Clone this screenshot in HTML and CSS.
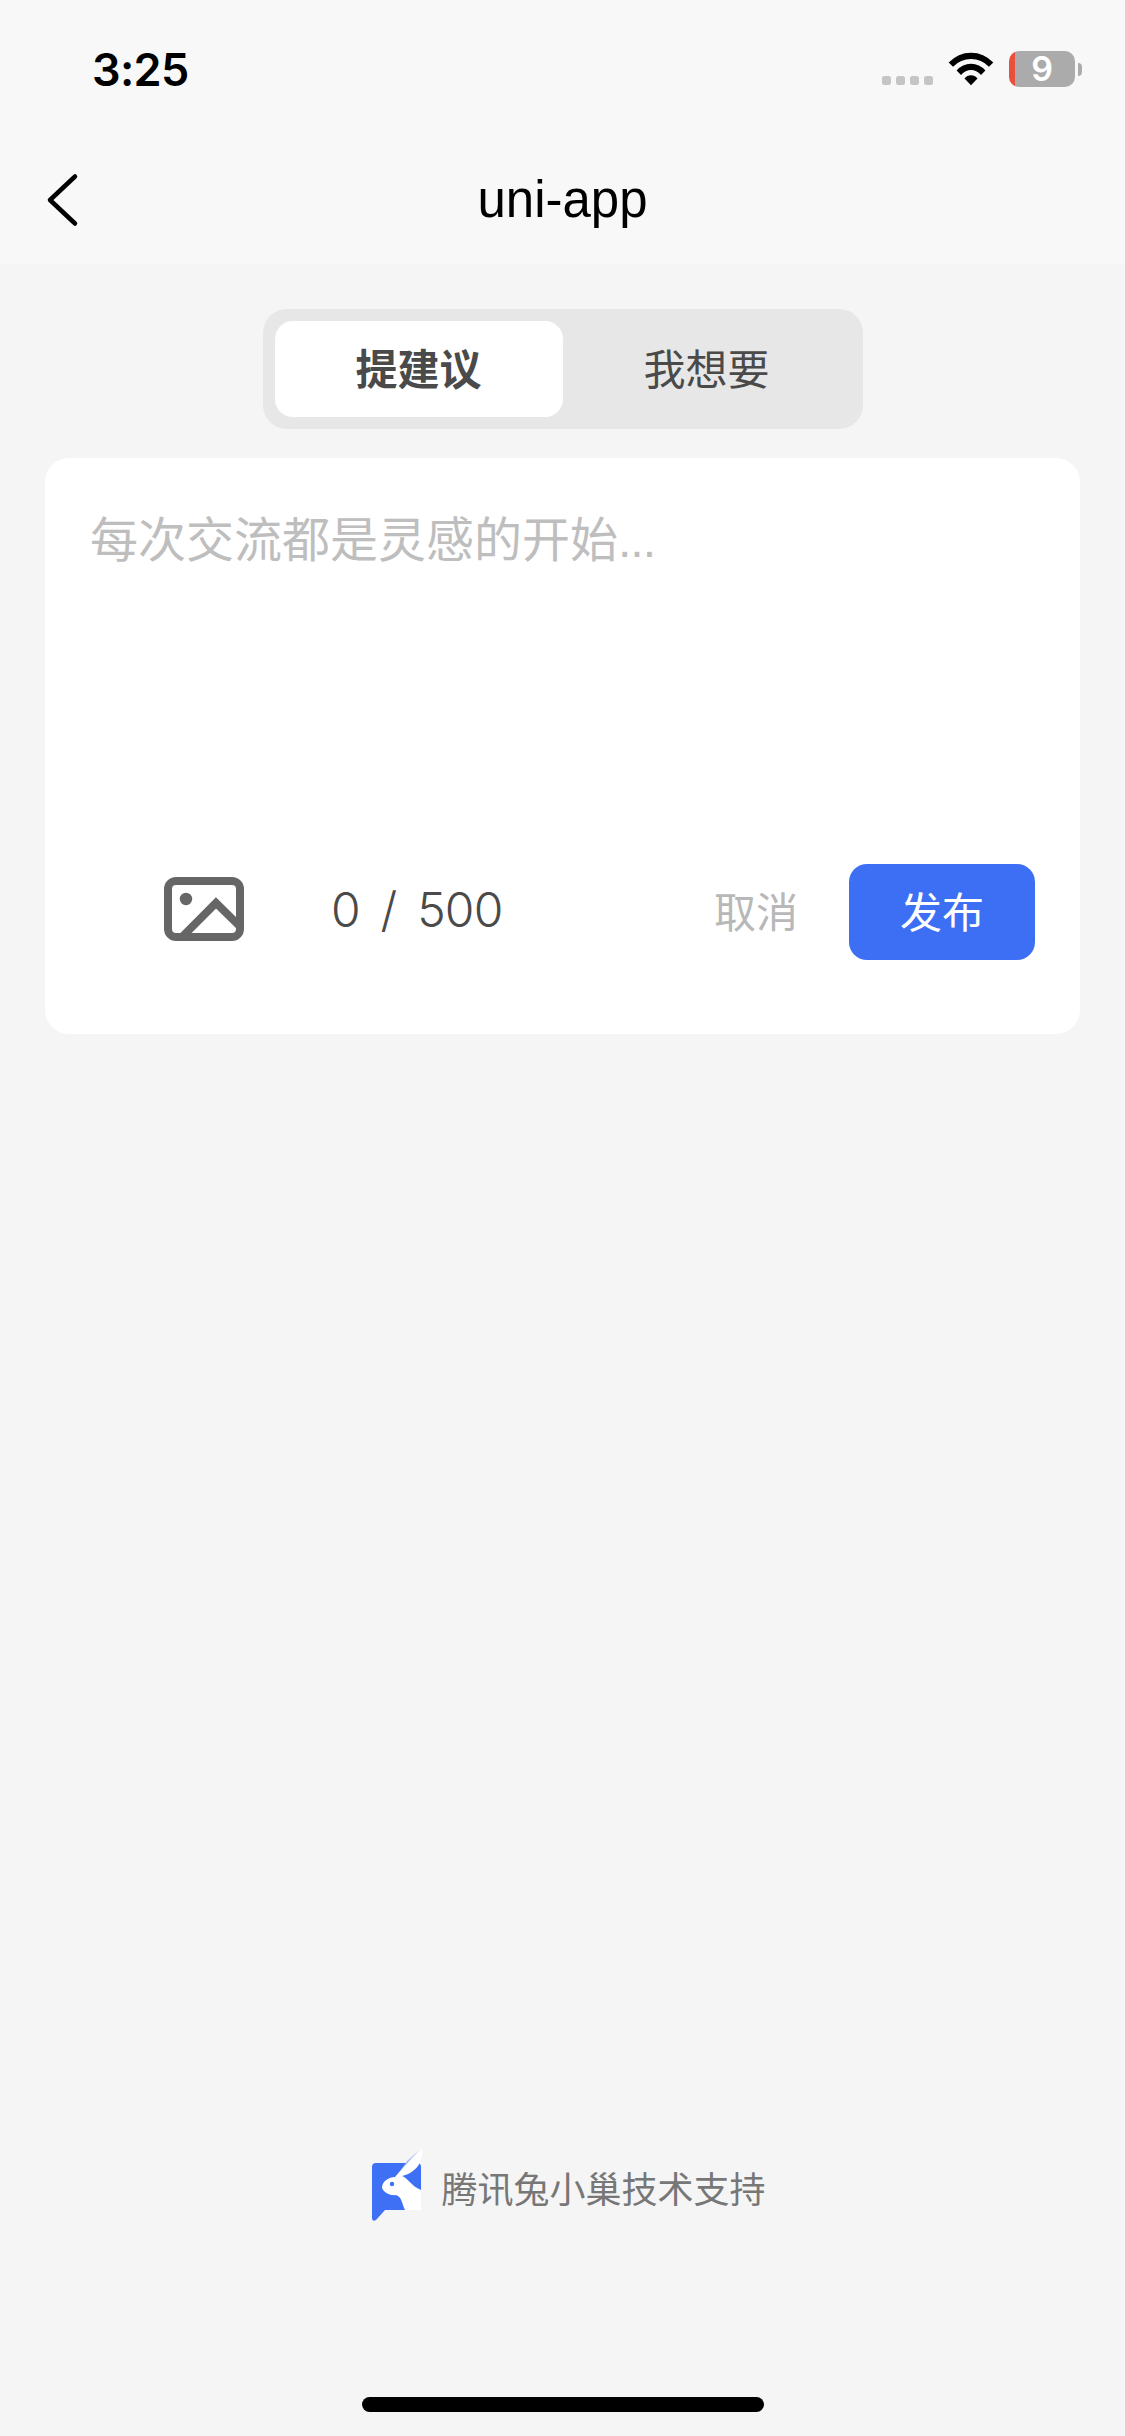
FILE: index.html
```html
<!DOCTYPE html>
<html lang="zh-CN">
<head>
<meta charset="utf-8">
<title>uni-app</title>
<link rel="stylesheet" href="styles.css">
</head>
<body>
<header class="header">
  <div class="status">
    <span class="time">3:25</span>
    <div class="indicators">
      <span class="signal"><i></i><i></i><i></i><i></i></span>
      <svg class="wifi" width="46" height="34" viewBox="0 0 46 34">
        <path d="M0.7 10.6Q10 0.7 23 0.7Q36 0.7 45.3 10.6L41 14.8Q33.500 7 23 7Q12.500 7 5 14.800Z"/>
        <path d="M8.600 18.600Q14.500 11.800 23 11.800Q31.500 11.800 37.400 18.600L33 23Q28.500 18 23 18Q17.500 18 13 23Z"/>
        <path d="M16.500 26.500Q19.300 23.200 23 23.200Q26.700 23.200 29.500 26.500L23 33.200Z"/>
      </svg>
      <span class="battery">9</span>
      <span class="battery-cap"></span>
    </div>
  </div>
  <nav class="nav">
    <svg class="back" width="34" height="54" viewBox="0 0 34 54"><path d="M30 3.500L5 27L30 50.500"/></svg>
    <h1 class="title">uni-app</h1>
  </nav>
</header>
<main class="main">
  <div class="tabs">
    <button class="tab tab-active">提建议</button>
    <button class="tab">我想要</button>
  </div>
  <section class="card">
    <p class="placeholder">每次交流都是灵感的开始<span class="dots">...</span></p>
    <div class="toolbar">
      <svg class="image-icon" width="80" height="64" viewBox="0 0 80 64">
        <rect x="4" y="4" width="72" height="56" rx="8"/>
        <path d="M17 61L52 26L76 49.500"/>
        <circle cx="22" cy="22" r="6.200"/>
      </svg>
      <span class="count">0 / 500</span>
      <button class="cancel">取消</button>
      <button class="submit">发布</button>
    </div>
  </section>
</main>
<footer class="footer">
  <div class="support">
    <svg class="logo" width="54" height="76" viewBox="0 0 54 76">
      <defs>
        <linearGradient id="ear" x1="0" y1="1" x2="1" y2="0">
          <stop offset="0" stop-color="#3d6ff5"/><stop offset="1" stop-color="#fff"/>
        </linearGradient>
      </defs>
      <path fill="#3d70f5" d="M5 17H46Q50 17 50 21V64H14L5 74Q1 76 1 72V21Q1 17 5 17Z"/>
      <path fill="url(#ear)" d="M27 29Q34 14 51 2L48 12L31 32Z"/>
      <path fill="#fff" d="M24 31C32 22 40 12 51 3C53 15 45 27 31 30C37 32 40 40 50 44V64H34C31 58 31 51 25 49C20 50 13 47 11 42C11 35 18 31 24 31Z"/>
      <circle cx="21" cy="38" r="2.200" fill="#3d70f5"/>
    </svg>
    <span class="support-text">腾讯兔小巢技术支持</span>
  </div>
  <div class="home-bar"></div>
</footer>
</body>
</html>
```
FILE: styles.css
```css
* { box-sizing: border-box; margin: 0; padding: 0; }
body {
  width: 1125px;
  height: 2436px;
  display: flex;
  flex-direction: column;
  overflow: hidden;
  background: #f5f5f5;
  color: #4a4a4a;
  font-family: "Liberation Sans", "Noto Sans CJK SC", sans-serif;
}
button { border: 0; background: none; color: inherit; font: inherit; }
svg { display: block; flex: none; }

.header { height: 264px; background: #f8f8f8; flex: none; }
.status {
  height: 132px;
  padding: 0 43px 0 92px;
  display: flex;
  justify-content: space-between;
  color: #000;
}
.time {
  padding-top: 43px;
  font: 600 45px/54px Inter, sans-serif;
  letter-spacing: -0.7px;
}
.indicators { display: flex; height: 36px; margin-top: 51px; align-items: center; }
.signal { display: flex; gap: 5px; margin: 23px 15px 0 0; }
.signal i { width: 9px; height: 9px; border-radius: 2.500px; background: #c5c5c5; }
.wifi { margin-right: 15px; fill: #000; }
.battery {
  width: 66px;
  height: 36px;
  border-radius: 10px;
  background: linear-gradient(90deg, #e84f3d 6px, #ababab 6px);
  color: #fff;
  font: 600 34px/36px Inter, sans-serif;
  text-align: center;
}
.battery-cap { width: 4px; height: 13px; margin-left: 3px; border-radius: 0 5px 5px 0; background: #ababab; }

.nav { height: 132px; padding-top: 3px; display: grid; grid-template-columns: 135px 1fr 135px; align-items: center; }
.back { margin-left: 45px; fill: none; stroke: #000; stroke-width: 4.500; stroke-linecap: round; stroke-linejoin: round; }
.title { color: #000; font-size: 51px; font-weight: 400; line-height: 60px; text-align: center; }

.main { flex: 1; padding: 45px 45px 0; display: flex; flex-direction: column; align-items: center; }
.tabs {
  width: 600px;
  height: 120px;
  padding: 12px;
  display: grid;
  grid-template-columns: 1fr 1fr;
  border-radius: 24px;
  background: #e7e7e7;
}
.tab { padding-top: 3px; border-radius: 18px; font-size: 42px; line-height: 93px; }
.tab-active { background: #fff; font-weight: 700; }
.card {
  width: 1035px;
  height: 576px;
  margin-top: 29px;
  padding: 47px 45px 74px;
  display: flex;
  flex-direction: column;
  justify-content: space-between;
  border-radius: 24px;
  background: #fff;
}
.placeholder { color: #bebebe; font-size: 48px; line-height: 72px; }
.dots { letter-spacing: -1px; }
.toolbar { display: flex; height: 96px; align-items: center; }
.image-icon { margin: -6px 87px 0 74px; fill: none; stroke: #666; stroke-width: 8; }
.image-icon circle { fill: #666; stroke: none; }
.count { margin-top: -4px; font: 300 48px/60px Inter, sans-serif; letter-spacing: -0.8px; word-spacing: 8px; white-space: pre; }
.cancel { margin-left: auto; padding-top: 3px; color: #b8b8b8; font-size: 42px; line-height: 93px; }
.submit {
  width: 186px;
  height: 96px;
  margin-left: 51px;
  padding-top: 3px;
  border-radius: 18px;
  background: #3d6ff5;
  color: #fff;
  font-size: 42px;
  line-height: 93px;
}

.footer { height: 290px; flex: none; display: flex; flex-direction: column; justify-content: space-between; align-items: center; padding-bottom: 24px; }
.support { display: flex; align-items: center; gap: 16px; padding-left: 12px; }
.support-text { color: #777; font-size: 36px; line-height: 54px; margin-top: 14px; }
.home-bar { width: 402px; height: 15px; border-radius: 8px; background: #000; }
```
